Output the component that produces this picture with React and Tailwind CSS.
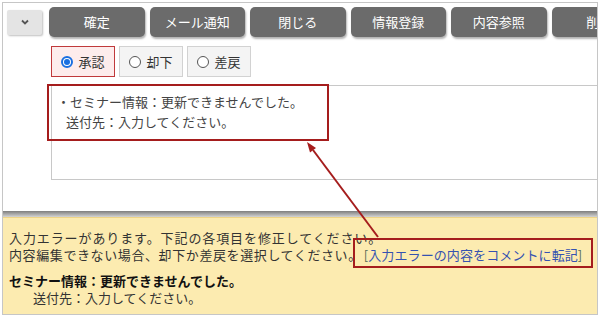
const buttons = ['確定', 'メール通知', '閉じる', '情報登録', '内容参照', '削除'];

function Radio({ label, checked }) {
  return (
    <div
      className={
        'flex items-center justify-center gap-[5px] w-[64px] h-[31px] border ' +
        (checked ? 'bg-[#fdecec] border-[#c0393b]' : 'bg-[#f4f4f4] border-[#d2d2d2]')
      }
    >
      {checked ? (
        <span className="flex items-center justify-center w-[12px] h-[12px] rounded-full border-2 border-[#1a6fe0] bg-white">
          <span className="w-[6px] h-[6px] rounded-full bg-[#1a6fe0]"></span>
        </span>
      ) : (
        <span className="w-[12px] h-[12px] rounded-full border border-[#555] bg-white"></span>
      )}
      <span className="text-[13px] leading-none text-[#333]">{label}</span>
    </div>
  );
}

export default function App() {
  return (
    <div className="relative w-[600px] h-[316px] bg-white overflow-hidden font-['Noto_Sans_CJK_JP','Noto_Sans',sans-serif] text-[#333]">
      <div className="mt-[2px] ml-[2px] w-[596px] border border-[#c6c6c6] overflow-hidden">
        {/* Toolbar */}
        <div className="flex items-center pt-[4px] pl-[4px]">
          <div className="flex items-center justify-center shrink-0 w-[35px] h-[25px] rounded-[2px] bg-[#e4e4e4] shadow-[1px_1px_2px_rgba(0,0,0,0.25)]">
            <svg width="8" height="6" viewBox="0 0 8 6">
              <path d="M1 1.5 L4 4.5 L7 1.5" fill="none" stroke="#555" strokeWidth="1.8" />
            </svg>
          </div>
          <div className="flex gap-[5px] ml-[7px]">
            {buttons.map((b) => (
              <div
                key={b}
                className="flex items-center justify-center shrink-0 w-[95.5px] h-[30px] rounded-[5px] bg-[#6b6b6b] text-white text-[13px] shadow-[1px_2px_2px_rgba(0,0,0,0.3)]"
              >
                {b}
              </div>
            ))}
          </div>
        </div>

        {/* Radio row */}
        <div className="flex gap-[4px] mt-[9px] pl-[48px]">
          <Radio label="承認" checked />
          <Radio label="却下" />
          <Radio label="差戻" />
        </div>

        {/* Comment box */}
        <div className="ml-[48px] mt-[8px] w-[560px] h-[95px] border border-[#c8c8c8] pt-[6px] pl-[5px] text-[13px] leading-[20px] text-[#444]">
          <div>・セミナー情報：更新できませんでした。</div>
          <div className="pl-[9px]">送付先：入力してください。</div>
        </div>

        <div className="h-[31px]"></div>
        <div className="h-[6px] bg-gradient-to-b from-[#7e7e7e] to-[#d4d4d4]"></div>

        {/* Error panel */}
        <div className="bg-[#fcebb0] border-t border-[#efd486] pt-[11px] pb-[8px] pl-[6px] text-[13px] leading-[17px]">
          <div className="tracking-[0.9px]">入力エラーがあります。下記の各項目を修正してください。</div>
          <div>
            <span className="tracking-[0.6px]">内容編集できない場合、却下か差戻を選択してください。</span>
            <span className="ml-[2px] text-[#566b56]">[</span>
            <span className="tracking-[0.1px] text-[#3552b0]">入力エラーの内容をコメントに転記</span>
            <span className="text-[#566b56]">]</span>
          </div>
          <div className="mt-[9px] font-bold text-[#111]">セミナー情報：更新できませんでした。</div>
          <div className="pl-[24px]">送付先：入力してください。</div>
        </div>
      </div>

      {/* Annotations */}
      <div className="absolute left-[47px] top-[84px] w-[282px] h-[57px] border-2 border-[#a51d1d]"></div>
      <div className="absolute left-[353px] top-[238px] w-[240px] h-[30px] border-2 border-[#a51d1d]"></div>
      <svg className="absolute left-0 top-0" width="600" height="316">
        <line x1="378" y1="237" x2="313" y2="150" stroke="#a51d1d" strokeWidth="2" />
        <polygon points="307,142 316,148 310,152.5" fill="#a51d1d" />
      </svg>
    </div>
  );
}
